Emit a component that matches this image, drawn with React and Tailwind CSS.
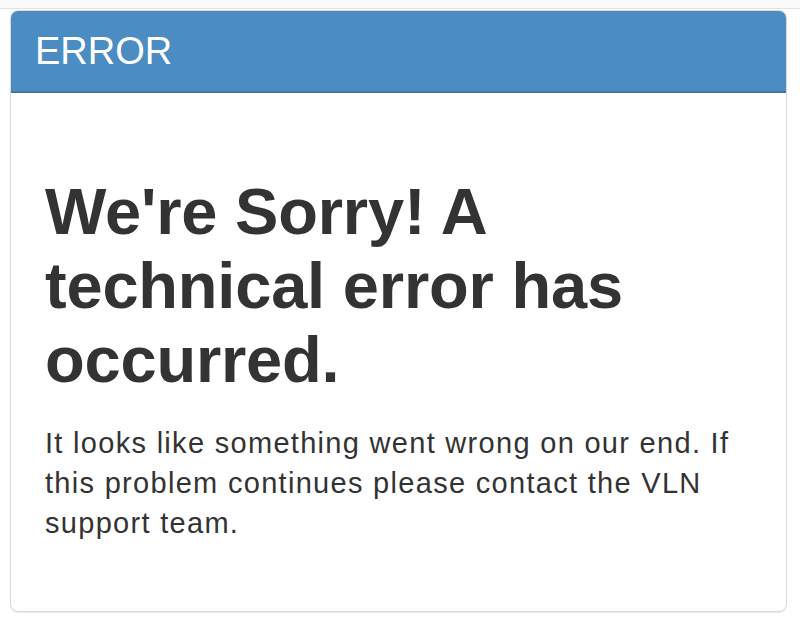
import React from 'react';

const App = () => (
  <div className="min-h-[628px] w-[800px] bg-white font-['Liberation_Sans',Arial,sans-serif] text-[#333]">
    <div className="h-[9px] bg-[#fafafa] border-b border-[#e2e2e2]" />
    <div className="ml-[10px] mt-[1px] w-[777px] h-[602px] rounded-[8px] border border-[#d9d9d9] bg-white overflow-hidden shadow-[0_1px_1px_rgba(0,0,0,0.08)]">
      <div className="h-[82px] flex items-center px-[24px] bg-[#4b8cc2] border-b-[2px] border-[#3e77a8]">
        <h3 className="text-[38px] leading-none text-white">ERROR</h3>
      </div>
      <div className="pl-[34px] pr-[20px] pt-[82px]">
        <h1 className="text-[65px] leading-[74px] font-bold tracking-[-0.2px] w-[640px]">
          We're Sorry! A technical error has occurred.
        </h1>
        <p className="mt-[26px] text-[29px] leading-[40px] tracking-[1.3px] w-[710px]">
          It looks like something went wrong on our end. If this problem continues please contact the VLN support team.
        </p>
      </div>
    </div>
  </div>
);

export default App;
